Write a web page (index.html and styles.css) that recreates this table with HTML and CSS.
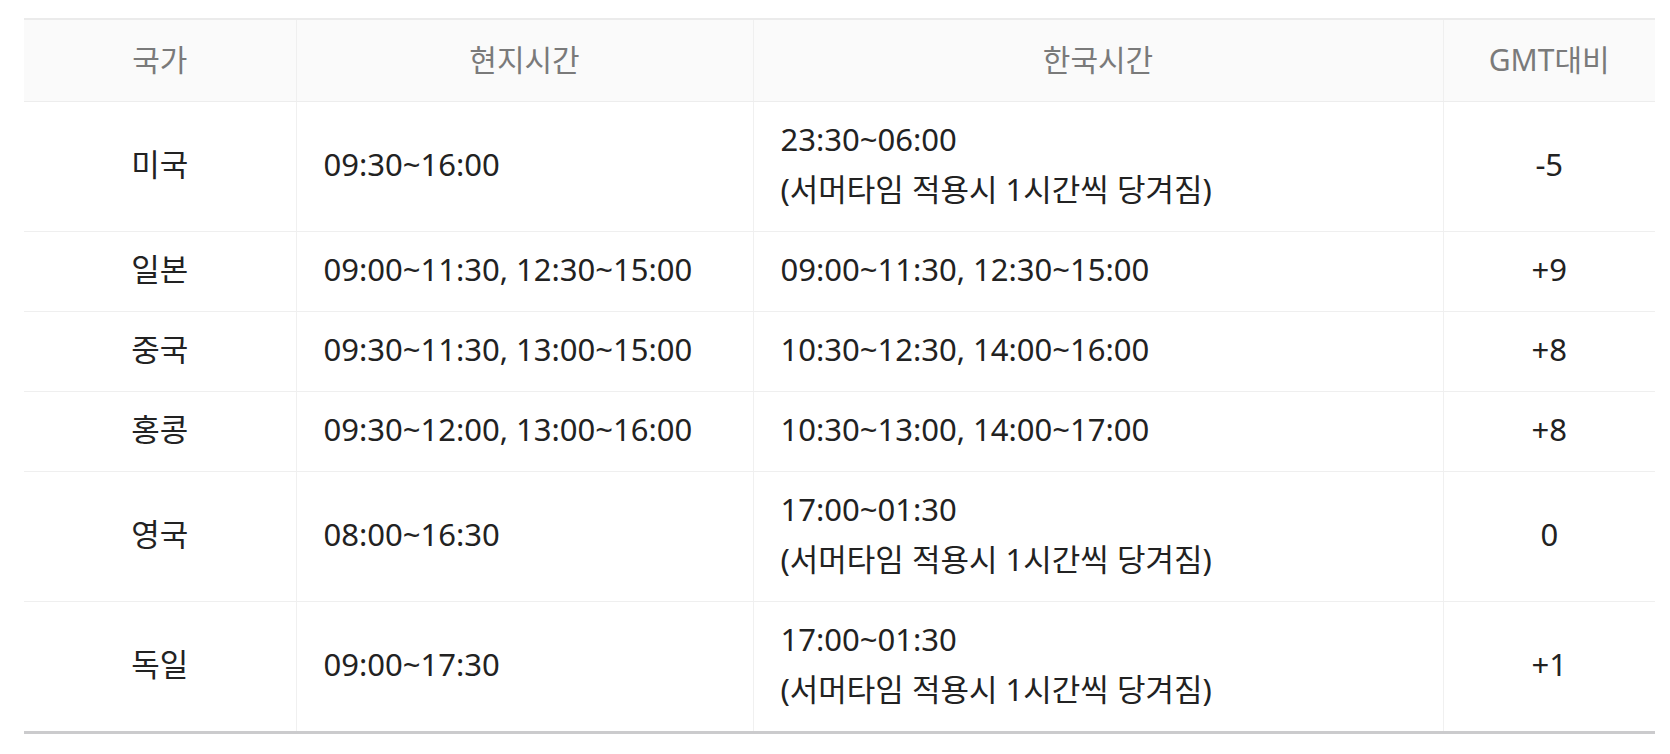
FILE: index.html
```html
<!DOCTYPE html>
<html lang="ko">
<head>
<meta charset="utf-8">
<title>해외주식 거래시간</title>
<link rel="stylesheet" href="styles.css">
</head>
<body>
<div class="wrap">
  <table class="tbl">
    <colgroup>
      <col class="c1"><col class="c2"><col class="c3"><col class="c4">
    </colgroup>
    <thead>
      <tr>
        <th>국가</th>
        <th>현지시간</th>
        <th>한국시간</th>
        <th>GMT대비</th>
      </tr>
    </thead>
    <tbody>
      <tr>
        <td class="ctr">미국</td>
        <td class="lft">09:30~16:00</td>
        <td class="lft">23:30~06:00<br>(서머타임 적용시 1시간씩 당겨짐)</td>
        <td class="ctr">-5</td>
      </tr>
      <tr>
        <td class="ctr">일본</td>
        <td class="lft">09:00~11:30, 12:30~15:00</td>
        <td class="lft">09:00~11:30, 12:30~15:00</td>
        <td class="ctr">+9</td>
      </tr>
      <tr>
        <td class="ctr">중국</td>
        <td class="lft">09:30~11:30, 13:00~15:00</td>
        <td class="lft">10:30~12:30, 14:00~16:00</td>
        <td class="ctr">+8</td>
      </tr>
      <tr>
        <td class="ctr">홍콩</td>
        <td class="lft">09:30~12:00, 13:00~16:00</td>
        <td class="lft">10:30~13:00, 14:00~17:00</td>
        <td class="ctr">+8</td>
      </tr>
      <tr>
        <td class="ctr">영국</td>
        <td class="lft">08:00~16:30</td>
        <td class="lft">17:00~01:30<br>(서머타임 적용시 1시간씩 당겨짐)</td>
        <td class="ctr">0</td>
      </tr>
      <tr>
        <td class="ctr">독일</td>
        <td class="lft">09:00~17:30</td>
        <td class="lft">17:00~01:30<br>(서머타임 적용시 1시간씩 당겨짐)</td>
        <td class="ctr">+1</td>
      </tr>
    </tbody>
  </table>
</div>
</body>
</html>
```
FILE: styles.css
```css
html, body {
  margin: 0;
  padding: 0;
  background: #ffffff;
}
body {
  font-family: "Noto Sans", "Noto Sans CJK KR", sans-serif;
  color: #222222;
}
.wrap {
  padding: 18px 0 0 24px;
}
.tbl {
  width: 1631px;
  border-collapse: collapse;
  table-layout: fixed;
  font-size: 31px;
  line-height: 50px;
}
.c1 { width: 272px; }
.c2 { width: 457px; }
.c3 { width: 690px; }
.c4 { width: 212px; }

.tbl th {
  background: #fafafa;
  color: #7a7a7a;
  font-size: 30px;
  font-weight: 400;
  text-align: center;
  padding: 15px 0 16px;
  border-top: 2px solid #ebebeb;
  border-bottom: 1px solid #ededed;
  border-left: 1px solid #efefef;
}
.tbl th:first-child,
.tbl td:first-child {
  border-left: none;
}
.tbl td {
  padding: 12px 0 17px;
  border-bottom: 1px solid #efefef;
  border-left: 1px solid #f0f0f0;
  vertical-align: middle;
}
.tbl tbody tr:last-child td {
  border-bottom: 3px solid #cbcbcd;
}
.ctr {
  text-align: center;
}
.lft {
  text-align: left;
  padding-left: 27px !important;
}
```
